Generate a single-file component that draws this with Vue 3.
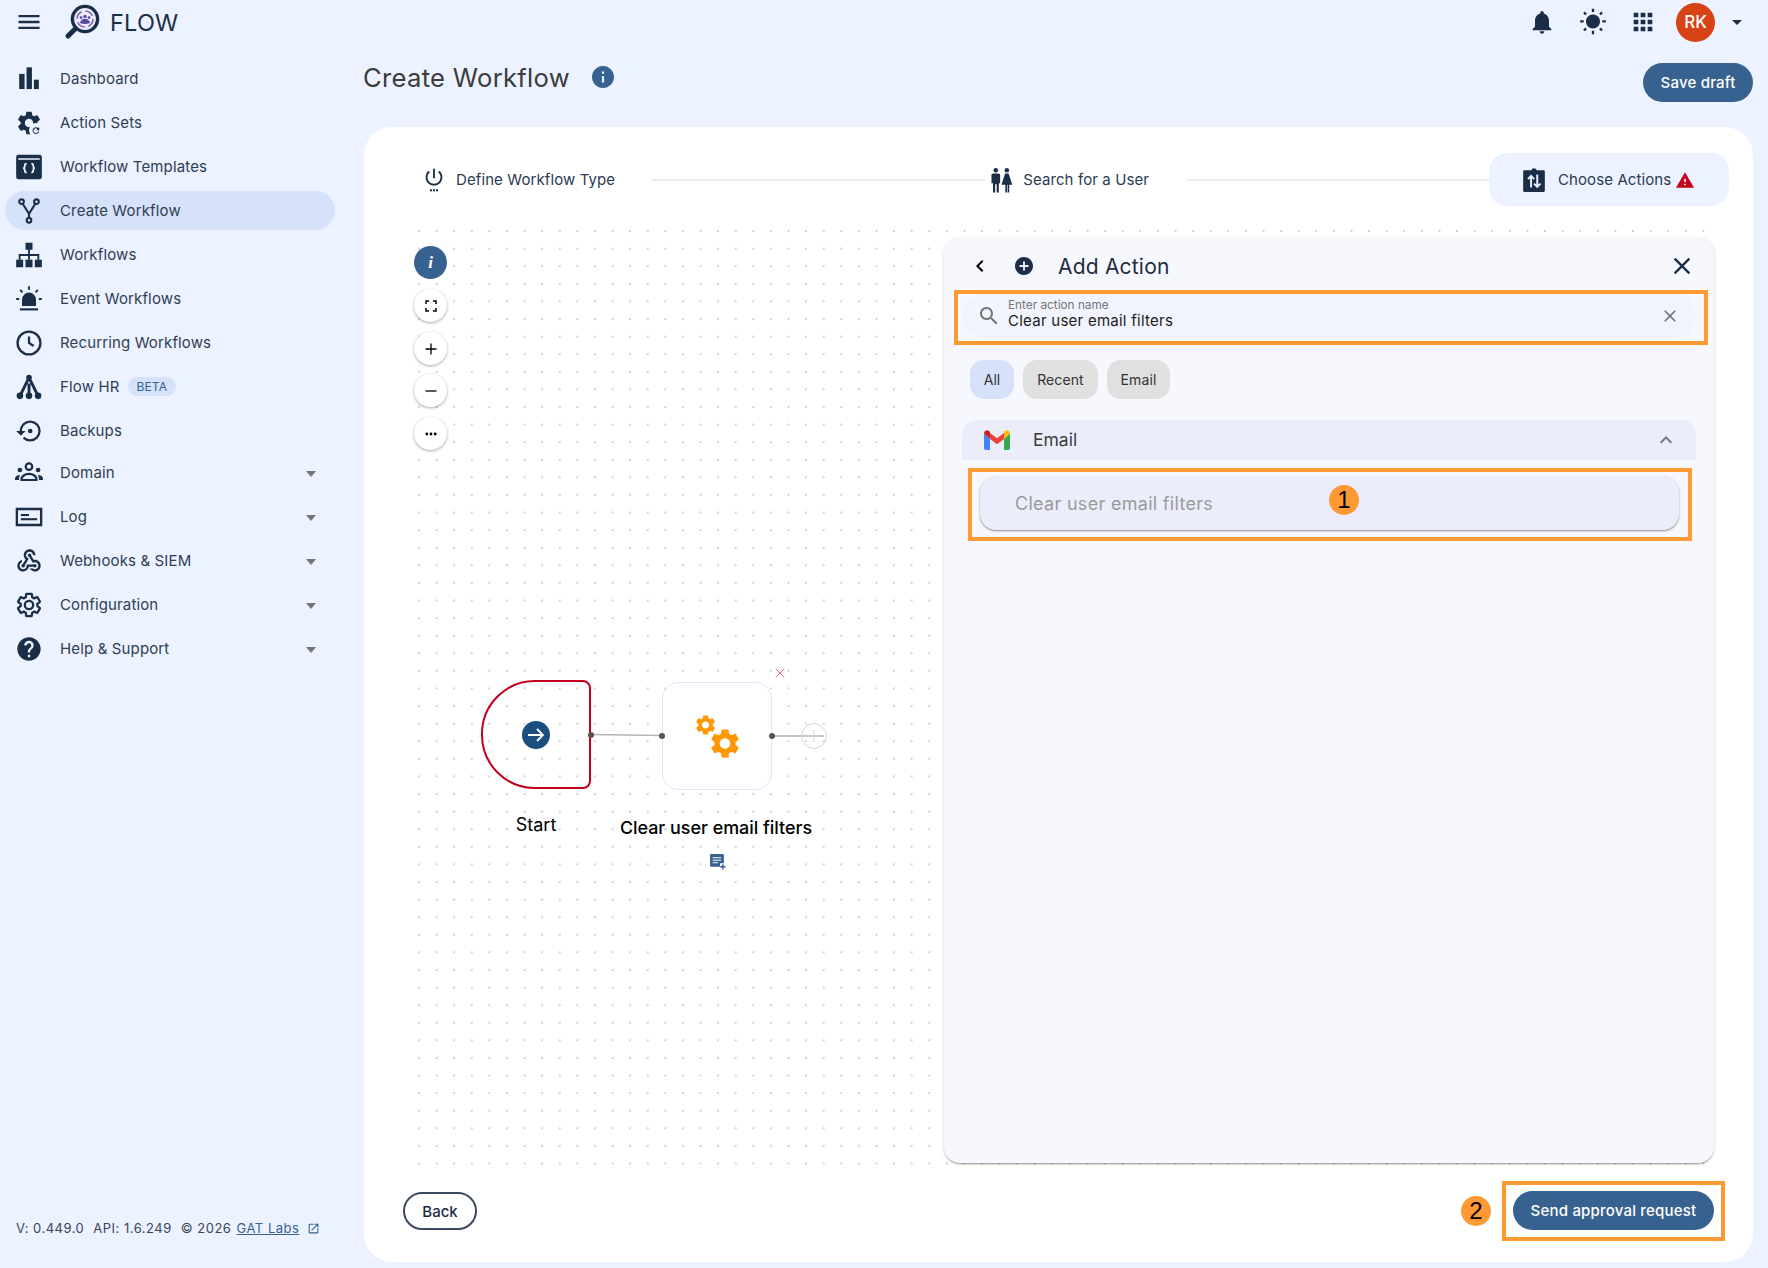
<script setup>
const navItems = [
  { label: 'Dashboard', icon: 'bars' },
  { label: 'Action Sets', icon: 'actionSets' },
  { label: 'Workflow Templates', icon: 'templates' },
  { label: 'Create Workflow', icon: 'fork', active: true },
  { label: 'Workflows', icon: 'sitemap' },
  { label: 'Event Workflows', icon: 'siren' },
  { label: 'Recurring Workflows', icon: 'clock' },
  { label: 'Flow HR', icon: 'hr', beta: true },
  { label: 'Backups', icon: 'backup' }
]

const navGroups = [
  { label: 'Domain', icon: 'groups' },
  { label: 'Log', icon: 'log' },
  { label: 'Webhooks & SIEM', icon: 'webhook' },
  { label: 'Configuration', icon: 'gear' },
  { label: 'Help & Support', icon: 'help' }
]

const gearPath = 'M19.14 12.94c.04-.3.06-.61.06-.94 0-.32-.02-.64-.07-.94l2.03-1.58c.18-.14.23-.41.12-.61l-1.92-3.32c-.12-.22-.37-.29-.59-.22l-2.39.96c-.5-.38-1.03-.7-1.62-.94l-.36-2.54c-.04-.24-.24-.41-.48-.41h-3.84c-.24 0-.43.17-.47.41l-.36 2.54c-.59.24-1.13.57-1.62.94l-2.39-.96c-.22-.08-.47 0-.59.22L2.74 8.87c-.12.21-.08.47.12.61l2.03 1.58c-.05.3-.09.63-.09.94s.02.64.07.94l-2.03 1.58c-.18.14-.23.41-.12.61l1.92 3.32c.12.22.37.29.59.22l2.39-.96c.5.38 1.03.7 1.62.94l.36 2.54c.05.24.24.41.48.41h3.84c.24 0 .44-.17.47-.41l.36-2.54c.59-.24 1.13-.56 1.62-.94l2.39.96c.22.08.47 0 .59-.22l1.92-3.32c.12-.22.07-.47-.12-.61l-2.01-1.58zM12 15.6c-1.98 0-3.6-1.62-3.6-3.6s1.62-3.6 3.6-3.6 3.6 1.62 3.6 3.6-1.62 3.6-3.6 3.6z'
</script>

<template>
  <div class="app">
    <!-- top bar -->
    <header class="topbar">
      <svg class="menu-icon" viewBox="0 0 24 24"><path d="M3 18h18v-2H3v2zm0-5h18v-2H3v2zm0-7v2h18V6H3z" /></svg>
      <svg class="logo" viewBox="0 0 36 36">
        <circle cx="21" cy="15" r="12.6" fill="#eeeaf8" stroke="#1a2e48" stroke-width="3.4" />
        <circle cx="21" cy="15" r="8" fill="none" stroke="#7a68b8" stroke-width="1.6" stroke-dasharray="9 3.6" />
        <circle cx="21" cy="12.4" r="1.7" fill="#5b4a9e" />
        <circle cx="17" cy="13.6" r="1.4" fill="#5b4a9e" />
        <circle cx="25" cy="13.6" r="1.4" fill="#5b4a9e" />
        <path d="M16 19c.4-2.4 2.4-4.2 5-4.2s4.6 1.8 5 4.2c-3 1.2-7 1.2-10 0z" fill="#5b4a9e" />
        <path d="M11.6 24.4 4 32" stroke="#1a2e48" stroke-width="5" stroke-linecap="round" />
      </svg>
      <span class="brand">FLOW</span>
      <div class="top-actions">
        <svg class="top-icon bell" viewBox="0 0 24 24"><path d="M12 22c1.1 0 2-.9 2-2h-4c0 1.1.89 2 2 2zm6-6v-5c0-3.07-1.64-5.64-4.5-6.32V4c0-.83-.67-1.5-1.5-1.5s-1.5.67-1.5 1.5v.68C7.63 5.36 6 7.92 6 11v5l-2 2v1h16v-1l-2-2z" /></svg>
        <svg class="top-icon" viewBox="0 0 24 24"><path d="M6.76 4.84l-1.8-1.79-1.41 1.41 1.79 1.79 1.42-1.41zM4 10.5H1v2h3v-2zm9-9.95h-2V3.5h2V.55zm7.45 3.91l-1.41-1.41-1.79 1.79 1.41 1.41 1.79-1.79zm-3.21 13.7l1.79 1.8 1.41-1.41-1.8-1.79-1.4 1.4zM20 10.5v2h3v-2h-3zm-8-5c-3.31 0-6 2.69-6 6s2.69 6 6 6 6-2.69 6-6-2.69-6-6-6zm-1 16.95h2V19.5h-2v2.95zm-7.45-3.91l1.41 1.41 1.79-1.8-1.41-1.41-1.79 1.8z" /></svg>
        <svg class="top-icon" viewBox="0 0 24 24"><path d="M4 8h4V4H4v4zm6 12h4v-4h-4v4zm-6 0h4v-4H4v4zm0-6h4v-4H4v4zm6 0h4v-4h-4v4zm6-10v4h4V4h-4zm-6 4h4V4h-4v4zm6 6h4v-4h-4v4zm0 6h4v-4h-4v4z" /></svg>
        <div class="avatar">RK</div>
        <span class="top-caret"></span>
      </div>
    </header>

    <!-- sidebar -->
    <aside class="sidebar">
      <nav class="nav">
        <a v-for="item in navItems" :key="item.label" class="nav-item" :class="{ active: item.active }">
          <svg class="nav-icon" viewBox="0 0 24 24">
            <template v-if="item.icon === 'bars'">
              <rect x="3.6" y="7.6" width="4.6" height="13" />
              <rect x="9.9" y="2" width="4.6" height="18.6" />
              <rect x="16.2" y="12.6" width="4.2" height="8" />
            </template>
            <template v-else-if="item.icon === 'actionSets'">
              <path :d="gearPath" />
              <circle cx="18" cy="18" r="6" fill="#ecf2ff" />
              <path d="M20.8 15.6v2.6h-2.6l1-1a1.9 1.9 0 1 0 .5 2h1.1a2.9 2.9 0 1 1-.9-2.9z" />
            </template>
            <template v-else-if="item.icon === 'templates'">
              <path fill-rule="evenodd" d="M3 1.5h18a2 2 0 0 1 2 2v17a2 2 0 0 1-2 2H3a2 2 0 0 1-2-2v-17a2 2 0 0 1 2-2zM2.8 4.4v1.4h18.4V4.4z" />
              <path d="M10 9.2c-1.4 0-1.6.7-1.6 1.7s-.4 2-1.4 2.1c1 .1 1.4 1.100 1.400 2.100s.2 1.700 1.600 1.700M14 9.200c1.400 0 1.600.7 1.600 1.700s.4 2 1.400 2.100c-1 .1-1.400 1.100-1.400 2.100s-.2 1.700-1.600 1.700" fill="none" stroke="#ecf2ff" stroke-width="1.500" />
            </template>
            <template v-else-if="item.icon === 'fork'">
              <g fill="none" stroke="currentColor" stroke-width="1.8">
                <circle cx="5.6" cy="4" r="2" /><circle cx="18.4" cy="4" r="2" /><circle cx="12" cy="20" r="2" />
                <path d="M6.6 5.8 12 14.4l5.4-8.6M12 14.4V18" />
              </g>
            </template>
            <template v-else-if="item.icon === 'sitemap'">
              <rect x="9" y="1.5" width="6" height="6" />
              <rect x="1" y="16" width="6" height="6.5" />
              <rect x="9" y="16" width="6" height="6.5" />
              <rect x="17" y="16" width="6" height="6.5" />
              <path d="M11.2 7h1.6v4.2H20.8V16h-1.6v-3.2h-6.400V16h-1.600v-3.200H4.800V16H3.200v-4.800h8z" />
            </template>
            <template v-else-if="item.icon === 'siren'">
              <path d="M6 18v-5.5a6 6 0 0 1 12 0V18z" />
              <rect x="4.2" y="20" width="15.6" height="1.8" />
              <path d="M12 1v3M4.4 4.200l2 2.100M19.600 4.200l-2 2.100M1 12h2.600M20.400 12H23" stroke="currentColor" stroke-width="1.6" fill="none" />
            </template>
            <template v-else-if="item.icon === 'clock'">
              <circle cx="12" cy="12" r="9.8" fill="none" stroke="currentColor" stroke-width="2" />
              <path d="M12 6.4V12l4 2.6" fill="none" stroke="currentColor" stroke-width="1.9" />
            </template>
            <template v-else-if="item.icon === 'hr'">
              <circle cx="12" cy="3.8" r="2.4" /><circle cx="4.2" cy="19.6" r="2.8" /><circle cx="12" cy="19.6" r="2.8" /><circle cx="19.8" cy="19.6" r="2.8" />
              <path d="M12 4 4.8 18.6M12 4l7.2 14.6M12 9v9" fill="none" stroke="currentColor" stroke-width="2.5" />
            </template>
            <template v-else-if="item.icon === 'backup'">
              <path d="M13 3a9 9 0 0 0-9 9H1l3.89 3.89.07.14L9 12H6c0-3.87 3.13-7 7-7s7 3.13 7 7-3.13 7-7 7c-1.93 0-3.68-.79-4.94-2.06l-1.42 1.42A8.954 8.954 0 0 0 13 21a9 9 0 0 0 0-18z" />
              <circle cx="13" cy="12" r="2" />
            </template>
          </svg>
          <span class="nav-label">{{ item.label }}</span>
          <span v-if="item.beta" class="beta">BETA</span>
        </a>
      </nav>
      <nav class="nav nav-groups">
        <a v-for="group in navGroups" :key="group.label" class="nav-item">
          <svg class="nav-icon" viewBox="0 0 24 24">
            <template v-if="group.icon === 'groups'">
              <circle cx="12" cy="6.6" r="2.8" fill="none" stroke="currentColor" stroke-width="1.9" />
              <circle cx="4.2" cy="9.4" r="2" /><circle cx="19.8" cy="9.4" r="2" />
              <path d="M5.6 18v-.6c0-2.6 2.8-4.6 6.4-4.6s6.4 2 6.4 4.6v.6z" fill="none" stroke="currentColor" stroke-width="1.9" />
              <path d="M0 18v-1c0-2 1.8-3.2 4.4-3.2-.6 1-1 2-1 4.2zM24 18v-1c0-2-1.8-3.2-4.4-3.2.6 1 1 2 1 4.2z" />
            </template>
            <template v-else-if="group.icon === 'log'">
              <path fill-rule="evenodd" d="M.6 4h22.8v16H.6zM2.6 6.2v11.600h18.800V6.200z" />
              <rect x="5" y="9.4" width="7" height="1.8" /><rect x="5" y="13" width="14" height="1.8" />
            </template>
            <template v-else-if="group.icon === 'webhook'">
              <path d="M10 15h5.880c.27-.31.67-.5 1.120-.5.83 0 1.500.67 1.500 1.500 0 .83-.67 1.500-1.500 1.500-.44 0-.84-.19-1.120-.5H11.900c-.46 2.280-2.480 4-4.900 4-2.760 0-5-2.240-5-5 0-2.420 1.720-4.440 4-4.900v2.050c-1.160.41-2 1.530-2 2.850 0 1.650 1.350 3 3 3s3-1.350 3-3v-1zm2.500-11c1.650 0 3 1.350 3 3h2c0-2.760-2.240-5-5-5s-5 2.240-5 5c0 1.430.6 2.710 1.560 3.620l-2.350 3.910c-.68.14-1.210.75-1.210 1.470 0 .83.67 1.500 1.500 1.500s1.500-.67 1.500-1.500c0-.16-.02-.31-.07-.45l3.380-5.630C10.490 9.380 9.500 8.310 9.500 7c0-1.650 1.350-3 3-3zm4.500 9c-.64 0-1.230.2-1.720.54l-3.050-5.070C11.530 8.350 11 7.740 11 7c0-.83.67-1.500 1.500-1.500S14 6.170 14 7c0 .15-.02.29-.06.43l2.190 3.650c.28-.05.57-.08.87-.08 2.760 0 5 2.240 5 5s-2.240 5-5 5c-1.850 0-3.470-1.010-4.330-2.500h2.670c.48.32 1.060.5 1.660.5 1.650 0 3-1.350 3-3s-1.350-3-3-3z" />
            </template>
            <template v-else-if="group.icon === 'gear'">
              <path :d="gearPath" fill="none" stroke="currentColor" stroke-width="2" />
            </template>
            <template v-else>
              <path d="M12 2C6.48 2 2 6.48 2 12s4.480 10 10 10 10-4.480 10-10S17.520 2 12 2zm1 17h-2v-2h2v2zm2.070-7.750l-.9.920C13.450 12.900 13 13.500 13 15h-2v-.5c0-1.100.45-2.100 1.170-2.830l1.240-1.260c.37-.36.59-.86.59-1.410 0-1.100-.9-2-2-2s-2 .9-2 2H8c0-2.210 1.790-4 4-4s4 1.790 4 4c0 .88-.36 1.680-.93 2.250z" />
            </template>
          </svg>
          <span class="nav-label">{{ group.label }}</span>
          <span class="nav-caret"></span>
        </a>
      </nav>
      <footer class="version">
        <span>V: 0.449.0</span>
        <span>API: 1.6.249</span>
        <span>© 2026 <a class="gat-link">GAT Labs</a></span>
        <svg class="ext-icon" viewBox="0 0 24 24"><path d="M19 19H5V5h7V3H5a2 2 0 0 0-2 2v14a2 2 0 0 0 2 2h14c1.100 0 2-.9 2-2v-7h-2v7zM14 3v2h3.590l-9.830 9.830 1.410 1.410L19 6.410V10h2V3h-7z" /></svg>
      </footer>
    </aside>

    <!-- main column -->
    <main class="main">
      <div class="title-row">
        <h1 class="title">Create Workflow</h1>
        <svg class="title-info" viewBox="2 2 20 20"><path d="M12 2C6.48 2 2 6.48 2 12s4.480 10 10 10 10-4.480 10-10S17.520 2 12 2zm1 15h-2v-6h2v6zm0-8h-2V7h2v2z" /></svg>
        <button class="btn-primary save-btn">Save draft</button>
      </div>

      <section class="card">
        <div class="stepper">
          <div class="step">
            <svg class="step-icon" viewBox="0 0 24 28">
              <path d="M13 2h-2v10h2V2zm4.830 2.170-1.420 1.420C17.990 6.860 19 8.810 19 11c0 3.870-3.130 7-7 7s-7-3.130-7-7c0-2.190 1.010-4.140 2.580-5.420L6.170 4.170C4.230 5.820 3 8.260 3 11c0 4.970 4.030 9 9 9s9-4.030 9-9c0-2.740-1.230-5.180-3.170-6.830z" />
              <rect x="7.6" y="24" width="2.2" height="2.2" /><rect x="10.9" y="24" width="2.2" height="2.2" /><rect x="14.2" y="24" width="2.2" height="2.2" />
            </svg>
            <span>Define Workflow Type</span>
          </div>
          <div class="step-line line-a"></div>
          <div class="step">
            <svg class="step-icon" viewBox="0 0 24 24">
              <circle cx="7.2" cy="3" r="2.1" /><circle cx="17.4" cy="3" r="2.1" />
              <path d="M4.6 6h5.200a1.400 1.400 0 0 1 1.400 1.400V15H10v8.500H8V16H6.600v7.500H4.600V15H3.200V7.400A1.400 1.400 0 0 1 4.600 6z" />
              <path d="M15.800 6h3.200l3.400 10.400h-2.800v7.100h-1.500v-7.100h-.6v7.100H16v-7.100h-3.600z" />
            </svg>
            <span>Search for a User</span>
          </div>
          <div class="step-line line-b"></div>
          <div class="step step-current">
            <svg class="step-icon" viewBox="0 0 24 24">
              <path fill-rule="evenodd" d="M3 3h6.400a2.800 2.800 0 0 1 5.200 0H21a1 1 0 0 1 1 1v18a1 1 0 0 1-1 1H3a1 1 0 0 1-1-1V4a1 1 0 0 1 1-1z" />
              <path d="M9.300 19V8.400M6.400 11.200l2.900-3 2.900 3M15 7v11M12 15.400l3 3 3-3" fill="none" stroke="#ecf2ff" stroke-width="1.800" />
            </svg>
            <span>Choose Actions</span>
            <svg class="warn-icon" viewBox="1 2 22 19"><path d="M1 21h22L12 2 1 21zm12-3h-2v-2h2v2zm0-4h-2v-4h2v4z" /></svg>
          </div>
        </div>

        <div class="canvas">
          <!-- canvas controls -->
          <div class="ctrl ctrl-info"><i>i</i></div>
          <div class="ctrl ctrl-fit">
            <svg viewBox="0 0 12 12"><path d="M1 4V1h3M8 1h3v3M11 8v3H8M4 11H1V8" fill="none" stroke="#000" stroke-width="1.500" /></svg>
          </div>
          <div class="ctrl ctrl-plus">
            <svg viewBox="0 0 12 12"><path d="M6 .5v11M.5 6h11" fill="none" stroke="#000" stroke-width="1.300" /></svg>
          </div>
          <div class="ctrl ctrl-minus">
            <svg viewBox="0 0 12 12"><path d="M.5 6h11" fill="none" stroke="#000" stroke-width="1.300" /></svg>
          </div>
          <div class="ctrl ctrl-more">
            <svg viewBox="0 0 12 12"><circle cx="1.8" cy="6" r="1.4" /><circle cx="6" cy="6" r="1.4" /><circle cx="10.2" cy="6" r="1.4" /></svg>
          </div>

          <!-- edges -->
          <svg class="edge edge-one" viewBox="0 0 72 4"><path d="M0 1.500L71 2.500" /></svg>
          <svg class="edge edge-two" viewBox="0 0 52 4"><path d="M0 2H52" /></svg>

          <!-- nodes -->
          <div class="node-start">
            <svg class="start-arrow" viewBox="0 0 28 28">
              <circle cx="14" cy="14" r="14" fill="#1a4f80" />
              <path d="M6 14h15M15 8l6 6-6 6" fill="none" stroke="#fff" stroke-width="1.800" />
            </svg>
          </div>
          <span class="handle handle-a"></span>
          <span class="node-label label-start">Start</span>

          <div class="node-action">
            <svg class="gears" viewBox="0 0 44 44">
              <path :d="gearPath" fill="#ff9800" transform="translate(-2.4 -2)" />
              <path :d="gearPath" fill="#ff9800" transform="translate(11.5 11) scale(1.46)" />
            </svg>
          </div>
          <span class="handle handle-b"></span>
          <span class="handle handle-c"></span>
          <svg class="node-remove" viewBox="0 0 10 10"><path d="M.7.7l8.600 8.600M9.300.7.7 9.300" stroke="#e0677c" stroke-width="1" fill="none" /></svg>
          <svg class="node-add" viewBox="0 0 26 26">
            <circle cx="13" cy="13" r="12.4" fill="none" stroke="#d4d4d4" />
            <path d="M13 7v12M7 13h12" stroke="#cfcfcf" />
          </svg>
          <span class="node-label label-action">Clear user email filters</span>
          <svg class="note-icon" viewBox="0 0 16 16">
            <path d="M2 1h11a1 1 0 0 1 1 1v7.600h-3.600V13H2a1 1 0 0 1-1-1V2a1 1 0 0 1 1-1z" fill="#37628f" />
            <path d="M3.400 4.400h8M3.400 6.800h8M3.400 9.200h5" stroke="#fff" stroke-width="1" />
            <path d="M13 10.500v5M10.500 13h5" stroke="#37628f" stroke-width="1.400" />
          </svg>

          <!-- add action panel -->
          <div class="panel">
            <div class="panel-head">
              <svg class="head-back" viewBox="0 0 24 24"><path d="M15.410 7.410 14 6l-6 6 6 6 1.410-1.410L10.830 12z" /></svg>
              <svg class="head-plus" viewBox="2 2 20 20"><path d="M12 2C6.48 2 2 6.48 2 12s4.480 10 10 10 10-4.480 10-10S17.520 2 12 2zm5 11h-4v4h-2v-4H7v-2h4V7h2v4h4v2z" /></svg>
              <span class="head-title">Add Action</span>
              <svg class="head-close" viewBox="0 0 24 24"><path d="M19 6.410 17.590 5 12 10.590 6.410 5 5 6.410 10.590 12 5 17.590 6.410 19 12 13.410 17.590 19 19 17.590 13.410 12z" /></svg>
            </div>

            <div class="mark mark-search">
              <div class="search-field">
                <svg class="search-icon" viewBox="0 0 24 24"><path d="M15.500 14h-.79l-.28-.27C15.410 12.590 16 11.110 16 9.500 16 5.910 13.090 3 9.500 3S3 5.910 3 9.500 5.910 16 9.500 16c1.610 0 3.090-.59 4.230-1.570l.27.28v.79l5 4.990L20.490 19l-4.990-5zm-6 0C7.010 14 5 11.990 5 9.500S7.010 5 9.500 5 14 7.010 14 9.500 11.990 14 9.500 14z" /></svg>
                <div class="search-text">
                  <span class="search-label">Enter action name</span>
                  <span class="search-value">Clear user email filters</span>
                </div>
                <svg class="search-clear" viewBox="0 0 24 24"><path d="M19 6.410 17.590 5 12 10.590 6.410 5 5 6.410 10.590 12 5 17.590 6.410 19 12 13.410 17.590 19 19 17.590 13.410 12z" /></svg>
              </div>
            </div>

            <div class="chips">
              <span class="chip chip-on">All</span>
              <span class="chip chip-recent">Recent</span>
              <span class="chip chip-email">Email</span>
            </div>

            <div class="accordion-head">
              <svg class="gmail" viewBox="0 0 26 20">
                <path d="M0 3.500V18a2 2 0 0 0 2 2h4V9z" fill="#4285f4" />
                <path d="M26 3.500V18a2 2 0 0 1-2 2h-4V9z" fill="#34a853" />
                <path d="M6 9v-6l7 5.200L20 3v6l-7 5.200z" fill="#ea4335" />
                <path d="M0 3.500C0 1 2.800-.6 4.800.9L6 1.800V9z" fill="#c5221f" />
                <path d="M26 3.500C26 1 23.200-.6 21.200.9L20 1.800V9z" fill="#fbbc04" />
              </svg>
              <span class="accordion-title">Email</span>
              <svg class="accordion-chev" viewBox="0 0 24 24"><path d="M12 8l-6 6 1.410 1.410L12 10.830l4.590 4.580L18 14z" /></svg>
            </div>

            <div class="mark mark-item">
              <div class="action-item">
                <span class="action-name">Clear user email filters</span>
                <span class="step-badge badge-one">1</span>
              </div>
            </div>
          </div>
        </div>

        <div class="card-foot">
          <button class="btn-back">Back</button>
          <span class="step-badge badge-two">2</span>
          <div class="mark mark-send">
            <button class="btn-primary send-btn">Send approval request</button>
          </div>
        </div>
      </section>
    </main>
  </div>
</template>

<style>
html, body { margin: 0; background: #ecf2ff; }
</style>

<style scoped>
* { box-sizing: border-box; }

.app {
  width: 1768px;
  height: 1268px;
  overflow: hidden;
  display: grid;
  grid-template-columns: 364px minmax(0, 1fr);
  grid-template-rows: 44px 1fr;
  background: #ecf2ff;
  font-family: Inter, "Liberation Sans", sans-serif;
  color: #2f3e52;
}

/* top bar */
.topbar {
  grid-column: 1 / -1;
  display: flex;
  align-items: center;
  color: #1a2e48;
}
.menu-icon { width: 28px; height: 28px; margin-left: 15px; fill: #1a2e48; }
.logo { width: 36px; height: 36px; margin-left: 21px; }
.brand { margin-left: 10px; font-size: 23.5px; color: #1a2e48; letter-spacing: .2px; }
.top-actions { margin-left: auto; display: flex; align-items: center; padding-right: 26px; }
.top-icon { width: 28px; height: 28px; fill: #1a2e48; margin-right: 22px; }
.bell { margin-right: 23px; }
.avatar {
  width: 39px; height: 39px; border-radius: 50%;
  background: #d84315; color: #fff; font-size: 17px; font-weight: 500;
  display: flex; align-items: center; justify-content: center;
  margin-left: -3px;
}
.top-caret {
  margin-left: 17px;
  border-left: 5.5px solid transparent; border-right: 5.5px solid transparent;
  border-top: 5.5px solid #1a2e48;
}

/* sidebar */
.sidebar { display: flex; flex-direction: column; padding: 15px 0 32px; }
.nav { display: flex; flex-direction: column; gap: 5px; padding-left: 5px; width: 335px; }
.nav-groups { margin-top: 3px; }
.nav-item {
  height: 39px;
  display: flex;
  align-items: center;
  border-radius: 20px;
  padding-left: 10px;
  font-size: 15px;
  letter-spacing: .14px;
  color: #2f3e52;
}
.nav-item.active { background: #d6e2f9; }
.nav-icon { width: 28px; height: 28px; fill: #1a2e48; color: #1a2e48; flex: none; }
.nav-label { margin-left: 17px; }
.beta {
  margin-left: 8px; height: 19px; padding: 0 9px; border-radius: 10px;
  background: #d6e2f9; color: #37628f; font-size: 12px;
  display: flex; align-items: center;
}
.nav-caret {
  margin-left: auto; margin-right: 19px; margin-top: 3px;
  border-left: 5.5px solid transparent; border-right: 5.5px solid transparent;
  border-top: 6px solid #757575;
}
.version {
  margin-top: auto;
  padding-left: 16px;
  display: flex; align-items: center; gap: 9px;
  font-size: 13px; letter-spacing: .5px; color: #3a4656;
}
.gat-link { color: #37628f; text-decoration: underline; margin-left: 1px; }
.ext-icon { width: 13px; height: 13px; fill: #37628f; margin-left: -1px; }

/* main */
.main { display: flex; flex-direction: column; padding-right: 15px; padding-bottom: 6px; min-height: 0; }
.title-row { height: 83px; display: flex; align-items: flex-start; flex: none; }
.title { margin: 18px 0 0 -1px; font-size: 25.6px; line-height: 31px; font-weight: 400; color: #3c3c3c; letter-spacing: .3px; }
.title-info { width: 22px; height: 22px; margin: 22px 0 0 22px; fill: #37628f; }
.save-btn { margin-left: auto; margin-top: 19px; width: 110px; }

.btn-primary {
  height: 39px;
  border: 0;
  border-radius: 20px;
  background: #37628f;
  color: #fff;
  font-family: inherit;
  font-size: 15px;
  font-weight: 500;
  letter-spacing: .2px;
}

.card {
  flex: 1;
  min-height: 0;
  background: #fff;
  border-radius: 28px;
  display: flex;
  flex-direction: column;
}

/* stepper */
.stepper {
  display: flex;
  align-items: center;
  margin-top: 26px;
  padding: 0 24px 0 57px;
  height: 53px;
  flex: none;
}
.step { display: flex; align-items: center; gap: 9px; font-size: 15px; letter-spacing: .1px; color: #2b3b52; white-space: nowrap; }
.step-icon { width: 26px; height: 26px; fill: #1a2e48; flex: none; }
.step-line { height: 2px; background: #ececec; }
.line-a { width: 333px; margin-left: 37px; margin-right: 3px; }
.line-b { flex: 1; margin-left: 38px; }
.step-current {
  width: 240px; height: 53px; padding-left: 32px; gap: 11px;
  border-radius: 18px; background: #ecf2ff;
}
.warn-icon { width: 18px; height: 16px; fill: #c4001d; margin-left: -6px; }

/* canvas */
.canvas {
  position: relative;
  flex: none;
  height: 935px;
  margin: 24px 0 0 51px;
  width: 1290px;
  display: flex;
  justify-content: flex-end;
  align-items: flex-start;
  background-image: radial-gradient(circle, #d2d2d2 .7px, transparent 1.1px);
  background-size: 17.6px 17.6px;
  background-position: -4.8px -7.8px;
}

.ctrl {
  position: absolute;
  left: -1px;
  width: 33px; height: 33px;
  border-radius: 50%;
  background: #fff;
  box-shadow: 0 1px 3px rgba(0, 0, 0, .35);
  display: flex; align-items: center; justify-content: center;
}
.ctrl svg { width: 12px; height: 12px; }
.ctrl-info { top: 16px; background: #37628f; color: #fff; font-family: "Liberation Serif", serif; font-size: 17px; font-weight: 700; box-shadow: none; }
.ctrl-fit { top: 59px; }
.ctrl-plus { top: 102px; }
.ctrl-minus { top: 144px; }
.ctrl-more { top: 187px; }

.edge { position: absolute; fill: none; stroke: #b5b5b5; stroke-width: 1.3; }
.edge-one { left: 176px; top: 503px; width: 72px; height: 4px; }
.edge-two { left: 357px; top: 504px; width: 52px; height: 4px; }

.node-start {
  position: absolute;
  left: 66px; top: 450px;
  width: 110px; height: 109px;
  border: 2.2px solid #c4001d;
  border-radius: 54px 8px 8px 54px / 54px 8px 8px 54px;
  display: flex; align-items: center; justify-content: center;
}
.start-arrow { width: 28px; height: 28px; }
.handle { position: absolute; width: 6px; height: 6px; border-radius: 50%; background: #555; }
.handle-a { left: 173px; top: 502px; }
.handle-b { left: 244px; top: 503px; }
.handle-c { left: 354px; top: 503px; }

.node-action {
  position: absolute;
  left: 247px; top: 452px;
  width: 110px; height: 108px;
  border: 1px solid #dfe8fb;
  border-radius: 17px;
  background: #fff;
  display: flex; align-items: center; justify-content: center;
}
.gears { width: 44px; height: 44px; margin-left: 2px; margin-top: 2px; }
.node-remove { position: absolute; left: 360px; top: 438px; width: 10px; height: 10px; }
.node-add { position: absolute; left: 386px; top: 493px; width: 26px; height: 26px; }
.node-label { position: absolute; white-space: nowrap; transform: translateX(-50%); color: #000; line-height: 22px; }
.label-start { left: 121px; top: 584px; font-size: 18px; }
.label-action { left: 301px; top: 587px; font-size: 17.9px; font-weight: 500; }
.note-icon { position: absolute; left: 293.5px; top: 622.5px; width: 17px; height: 17px; }

/* panel */
.panel {
  flex: none;
  width: 770px;
  height: 924px;
  margin: 9px -9px 0 0;
  border-radius: 16px;
  background: #f7f8fe;
  box-shadow: 0 2px 2px -1px rgba(0, 0, 0, .4), 0 0 4px rgba(0, 0, 0, .12);
  display: flex;
  flex-direction: column;
}
.panel-head { height: 51px; display: flex; align-items: center; padding: 3px 18px 0 24px; flex: none; }
.head-back { width: 24px; height: 24px; fill: #000; }
.head-plus { width: 18px; height: 18px; fill: #1a2e48; margin-left: 23px; }
.head-title { margin-left: 25px; font-size: 21px; color: #1e2c40; letter-spacing: .2px; }
.head-close { width: 28px; height: 28px; fill: #1a2e48; margin-left: auto; }

.mark { border: 4px solid #ff9933; flex: none; }
.mark-search { height: 55px; margin: 0 6px 0 10px; padding: 0 8px 0 4px; }
.search-field {
  height: 44px;
  display: flex; align-items: center;
  border-radius: 22px;
  background: #f1f4fd;
  padding: 0 14px 0 15px;
}
.search-icon { width: 24px; height: 24px; fill: #757575; flex: none; }
.search-text { display: flex; flex-direction: column; margin-left: 7px; padding-bottom: 3px; }
.search-label { font-size: 11.8px; line-height: 13px; color: #757575; }
.search-value { font-size: 15px; line-height: 18px; color: #1a1a1a; letter-spacing: .25px; }
.search-clear { width: 20px; height: 20px; fill: #757575; margin-left: auto; margin-right: 2px; }

.chips { display: flex; gap: 9px; margin: 15px 0 0 26px; flex: none; }
.chip {
  height: 39px; border-radius: 14px;
  background: #e0e0e0; color: #333; font-size: 14px; letter-spacing: .1px;
  display: flex; align-items: center; justify-content: center;
}
.chip-on { background: #d6e2f9; width: 44px; }
.chip-recent { width: 75px; }
.chip-email { width: 63px; }

.accordion-head {
  height: 40px; margin: 21px 18px 0 18px; flex: none;
  display: flex; align-items: center;
  padding: 0 18px 0 22px;
  background: #ecedfa;
  border-radius: 14px 14px 0 0;
}
.gmail { width: 26px; height: 20px; }
.accordion-title { margin: -1px 0 0 23px; font-size: 17.5px; color: #3c3c3c; }
.accordion-chev { width: 24px; height: 24px; fill: #757575; margin-left: auto; }

.mark-item { height: 73px; margin: 8px 22px 0 24px; padding: 4px 9px 7px 8px; }
.action-item {
  position: relative;
  height: 54px;
  display: flex; align-items: center;
  padding-left: 35px;
  border-radius: 16px;
  background: #ecedfa;
  box-shadow: 0 1px 2px rgba(0, 0, 0, .45);
}
.action-name { font-size: 18px; color: #9a9a9a; letter-spacing: .3px; }
.step-badge {
  width: 30px; height: 30px; border-radius: 50%;
  background: #ff9933; color: #000;
  font-family: "Liberation Sans", sans-serif; font-size: 24px;
  display: flex; align-items: center; justify-content: center;
}
.badge-one { position: absolute; left: 349px; top: 9px; }

/* card footer */
.card-foot { display: flex; align-items: center; padding: 16px 28px 0 39px; flex: none; }
.btn-back {
  width: 74px; height: 38px;
  border: 2px solid #3b4a5e; border-radius: 20px; background: #fff;
  color: #1e2c40; font-family: inherit; font-size: 15px; font-weight: 500;
}
.badge-two { margin-left: auto; margin-right: 11px; }
.mark-send { width: 223px; height: 60px; padding: 6px 7px; }
.send-btn { width: 201px; }
</style>
